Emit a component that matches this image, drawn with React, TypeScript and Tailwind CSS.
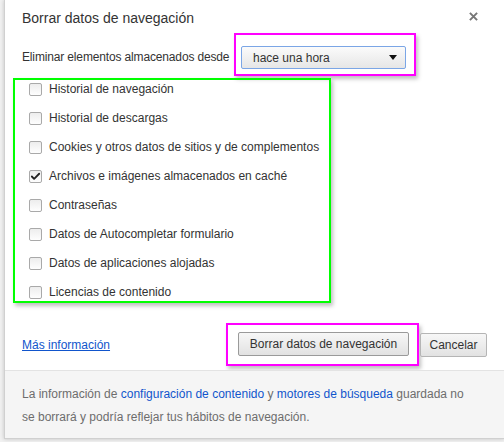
import { Check } from "lucide-react";

const items = [
  { label: "Historial de navegación", checked: false },
  { label: "Historial de descargas", checked: false },
  { label: "Cookies y otros datos de sitios y de complementos", checked: false },
  { label: "Archivos e imágenes almacenados en caché", checked: true },
  { label: "Contraseñas", checked: false },
  { label: "Datos de Autocompletar formulario", checked: false },
  { label: "Datos de aplicaciones alojadas", checked: false },
  { label: "Licencias de contenido", checked: false },
];

function Checkbox({ checked }: { checked: boolean }) {
  return (
    <span className="flex h-[13px] w-[13px] shrink-0 items-center justify-center rounded-[2px] border border-[#a9a9a9] bg-gradient-to-b from-[#ededed] to-[#fefefe]">
      {checked && <Check className="h-[11px] w-[11px] text-[#222]" strokeWidth={4} />}
    </span>
  );
}

export default function App() {
  return (
    <div
      className="flex h-[442px] w-[504px] bg-[#f1f1f1] text-[12px] text-[#333]"
      style={{ fontFamily: '"Liberation Sans", Arial, sans-serif' }}
    >
      <div className="ml-[4px] flex h-[439px] flex-1 flex-col border-b border-l border-[#d0d0d0] bg-white shadow-[0_0_4px_rgba(0,0,0,0.2)]">
        {/* Header */}
        <div className="flex items-start pt-[8px] pl-[17px] pr-[26px]">
          <h1 className="h-[20px] flex-1 text-[14px] leading-[20px] text-[#333]">
            Borrar datos de navegación
          </h1>
          <svg viewBox="0 0 10 10" className="mt-[4px] h-[9px] w-[9px]">
            <path d="M1 1L9 9M9 1L1 9" stroke="#777" strokeWidth="2.2" />
          </svg>
        </div>

        {/* Time range */}
        <div className="mt-[5px] flex items-center pl-[17px]">
          <span className="mt-[5px] w-[212px] shrink-0 whitespace-nowrap tracking-[-0.15px]">
            Eliminar elementos almacenados desde
          </span>
          <div className="border-2 border-[#ff00ff] pt-[11px] pr-[8px] pb-[5px] pl-[5px] shadow-[2px_3px_4px_rgba(0,0,0,0.25)]">
            <div className="flex h-[23px] w-[165px] items-center rounded-[2px] border border-[#7ba6e6] bg-gradient-to-b from-[#fbfbfb] to-[#e6e6e6] pr-[8px] pl-[11px]">
              <span className="flex-1">hace una hora</span>
              <svg viewBox="0 0 8 5" className="h-[5px] w-[8px]">
                <path d="M0 0H8L4 5Z" fill="#111" />
              </svg>
            </div>
          </div>
        </div>

        {/* Checkbox list */}
        <div className="mt-[2px] ml-[8px] flex h-[225px] w-[318px] flex-col gap-[11px] border-2 border-[#00ff00] pl-[14px] shadow-[2px_3px_4px_rgba(0,0,0,0.25)]">
          {items.map((item) => (
            <label key={item.label} className="flex h-[18px] items-center gap-[7px] whitespace-nowrap">
              <Checkbox checked={item.checked} />
              <span>{item.label}</span>
            </label>
          ))}
        </div>

        {/* Actions */}
        <div className="mt-[20px] flex items-center pl-[17px] pr-[17px]">
          <a href="#" className="flex-1 text-[#1155cc] underline">
            Más información
          </a>
          <div className="border-2 border-[#ff00ff] pt-[7px] pr-[8px] pb-[8px] pl-[10px] shadow-[2px_3px_4px_rgba(0,0,0,0.25)]">
            <button className="h-[24px] w-[171px] rounded-[2px] border border-[#9a9a9a] bg-gradient-to-b from-[#f7f7f7] to-[#e2e2e2] text-[#333]">
              Borrar datos de navegación
            </button>
          </div>
          <button className="ml-[1px] h-[24px] w-[67px] rounded-[2px] border border-[#b5b5b5] bg-gradient-to-b from-[#f7f7f7] to-[#e2e2e2] text-[#333]">
            Cancelar
          </button>
        </div>

        {/* Footer */}
        <div className="mt-[4px] flex-1 border-t border-[#e3e3e3] bg-[#f5f5f5] pt-[12px] pl-[17px] pr-[10px] leading-[23px] whitespace-nowrap text-[#6d6d6d]">
          <p>
            La información de <span className="text-[#1155cc]">configuración de contenido</span> y{" "}
            <span className="text-[#1155cc]">motores de búsqueda</span> guardada no
          </p>
          <p>se borrará y podría reflejar tus hábitos de navegación.</p>
        </div>
      </div>
    </div>
  );
}
